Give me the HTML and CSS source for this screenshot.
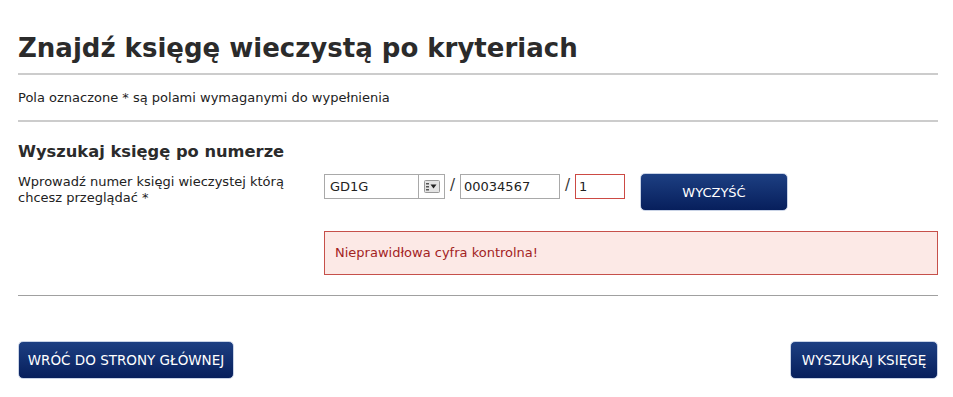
FILE: index.html
```html
<!DOCTYPE html>
<html lang="pl">
<head>
    <meta charset="UTF-8">
    <title>Znajdź księgę wieczystą po kryteriach</title>
<link rel="stylesheet" href="styles.css">
</head>
<body>
    <div class="page">
        <h1 class="title">Znajdź księgę wieczystą po kryteriach</h1>
        <p class="note">Pola oznaczone * są polami wymaganymi do wypełnienia</p>

        <div class="section">
            <h2 class="section-title">Wyszukaj księgę po numerze</h2>
            <div class="row">
                <label class="row-label">Wprowadź numer księgi wieczystej którą chcesz przeglądać *</label>
                <div class="row-fields">
                    <div class="fields">
                        <div class="select">
                            <span class="select-value">GD1G</span>
                            <span class="select-btn">
                                <svg width="16" height="13" viewBox="0 0 16 13">
                                    <rect x="0.5" y="0.5" width="15" height="12" rx="1" fill="#e4e4e4" stroke="#999"/>
                                    <rect x="2" y="3" width="3" height="1.5" fill="#555"/>
                                    <rect x="2" y="6" width="3" height="1.5" fill="#555"/>
                                    <rect x="2" y="9" width="3" height="1.5" fill="#555"/>
                                    <path d="M6.5 4.5 L12.5 4.5 L9.5 8.5 Z" fill="#222"/>
                                </svg>
                            </span>
                        </div>
                        <span class="slash">/</span>
                        <input class="field field-num" type="text" value="00034567">
                        <span class="slash">/</span>
                        <input class="field field-check error" type="text" value="1">
                        <button type="button" class="btn btn-clear">WYCZYŚĆ</button>
                    </div>
                    <div class="alert">Nieprawidłowa cyfra kontrolna!</div>
                </div>
            </div>
        </div>

        <div class="actions">
            <button type="button" class="btn btn-back">WRÓĆ DO STRONY GŁÓWNEJ</button>
            <button type="button" class="btn btn-search">WYSZUKAJ KSIĘGĘ</button>
        </div>
    </div>
</body>
</html>
```

FILE: styles.css
```css
* {
    margin: 0;
    padding: 0;
    box-sizing: border-box;
}

body {
    background: #fff;
    font-family: "DejaVu Sans", Verdana, sans-serif;
    color: #222;
}

.page {
    width: 920px;
    margin-left: 18px;
    padding-top: 31px;
}

.title {
    font-size: 26px;
    font-weight: bold;
    color: #2b2b2b;
    line-height: 34px;
    padding-bottom: 8px;
    border-bottom: 2px solid #cccccc;
}

.note {
    font-size: 13px;
    line-height: 16px;
    padding: 15px 0 14px;
    border-bottom: 2px solid #cccccc;
}

.section {
    padding-top: 19px;
    padding-bottom: 20px;
    border-bottom: 1px solid #a0a0a0;
}

.section-title {
    font-size: 16.3px;
    font-weight: bold;
    line-height: 22px;
    color: #2b2b2b;
    margin-bottom: 10px;
}

.row {
    display: flex;
}

.row-label {
    width: 306px;
    font-size: 13px;
    line-height: 16px;
    padding-top: 1px;
    padding-right: 16px;
}

.row-fields {
    flex: 1;
}

.fields {
    display: flex;
    align-items: flex-start;
    height: 38px;
}

.select {
    display: flex;
    width: 121px;
    height: 25px;
    margin-top: 1px;
    border: 1px solid #a9a9a9;
    font-size: 13px;
}

.select-value {
    flex: 1;
    padding-left: 5px;
    line-height: 23px;
    border-right: 1px solid #a9a9a9;
}

.select-btn {
    width: 25px;
    display: flex;
    align-items: center;
    justify-content: center;
}

.slash {
    font-size: 15px;
    line-height: 25px;
    color: #333;
    width: 15px;
    text-align: center;
}

.field {
    height: 25px;
    margin-top: 1px;
    border: 1px solid #a9a9a9;
    font-family: "DejaVu Sans", Verdana, sans-serif;
    font-size: 13px;
    padding-left: 3px;
    color: #222;
    outline: none;
}

.field-num {
    width: 100px;
}

.field-check {
    width: 50px;
}

.field.error {
    border-color: #cc4a44;
}

.btn {
    height: 38px;
    border: 1px solid #c9d3e6;
    border-radius: 5px;
    background: linear-gradient(#1d3f82, #071f5c);
    color: #fff;
    font-family: "DejaVu Sans", Verdana, sans-serif;
    font-size: 13.5px;
    cursor: pointer;
}

.btn-clear {
    width: 148px;
    margin-left: 15px;
    font-size: 13px;
}

.alert {
    margin-top: 20px;
    height: 44px;
    background: #fce9e6;
    border: 1px solid #c6504a;
    color: #a3231f;
    font-size: 13px;
    line-height: 42px;
    padding-left: 10px;
}

.actions {
    display: flex;
    justify-content: space-between;
    padding-top: 45px;
}

.btn-back {
    width: 216px;
}

.btn-search {
    width: 148px;
}
```
